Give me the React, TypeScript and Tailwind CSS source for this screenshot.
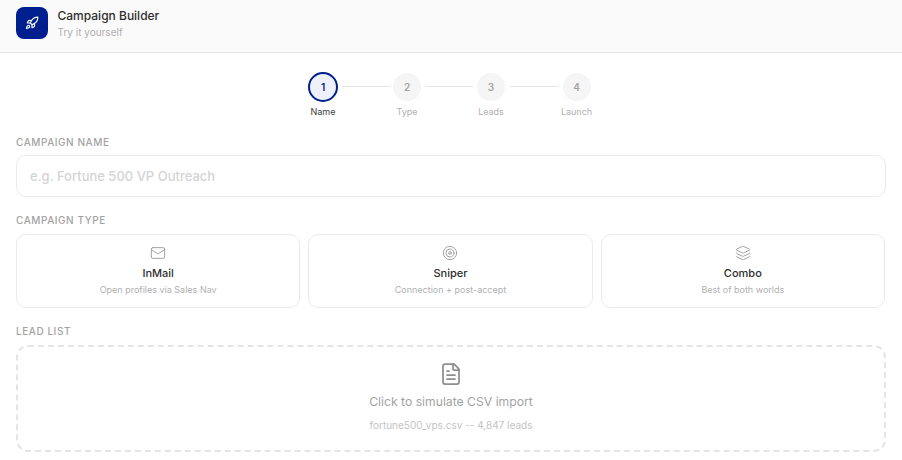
import { FileText, Layers, Mail, Rocket, Target } from "lucide-react";

const steps = [
  { n: 1, label: "Name", width: "w-[30px]" },
  { n: 2, label: "Type", width: "w-[28px]" },
  { n: 3, label: "Leads", width: "w-[30px]" },
  { n: 4, label: "Launch", width: "w-[31px]" },
];

const types = [
  { name: "InMail", desc: "Open profiles via Sales Nav", icon: Mail },
  { name: "Sniper", desc: "Connection + post-accept", icon: Target },
  { name: "Combo", desc: "Best of both worlds", icon: Layers },
];

function FieldLabel({ children }: { children: React.ReactNode }) {
  return (
    <div className="text-[10px] leading-[14px] font-[550] tracking-[0.55px] text-[#a3a3a3] uppercase">
      {children}
    </div>
  );
}

export default function App() {
  return (
    <div className="h-[460px] overflow-hidden bg-white font-['Inter',sans-serif] antialiased">
      {/* Header */}
      <header className="flex h-[53px] items-start gap-[9.5px] border-b border-[#e5e5e5] bg-[#fafafa] pt-[7px] pl-4">
        <div className="flex h-8 w-8 items-center justify-center rounded-lg bg-[#001f8f] text-white">
          <Rocket className="h-3.5 w-3.5" />
        </div>
        <div>
          <div className="mt-[1px] text-[12px] leading-4 font-[550] text-[#2e2e2e]">
            Campaign Builder
          </div>
          <div className="mt-[1px] text-[10px] leading-[14px] text-[#b0b0b0]">Try it yourself</div>
        </div>
      </header>

      {/* Stepper */}
      <div className="flex items-start justify-center pt-[19px] pr-[2px]">
        {steps.map((step, i) => (
          <div key={step.n} className="flex items-start">
            {i > 0 && <div className="mx-[3.5px] mt-[14px] h-px w-12 bg-[#e5e5e5]" />}
            <div className={`flex flex-col items-center ${step.width}`}>
              {step.n === 1 ? (
                <div className="flex h-[30px] w-[30px] items-center justify-center rounded-full border-2 border-[#001f8f] bg-[#eef0fa] text-[10px] font-semibold text-[#001f8f]">
                  1
                </div>
              ) : (
                <div className="mt-px flex h-7 w-7 items-center justify-center rounded-full bg-[#f5f5f5] text-[10px] font-semibold text-[#a3a3a3]">
                  {step.n}
                </div>
              )}
              <div
                className={`text-[9px] leading-3 whitespace-nowrap ${
                  step.n === 1 ? "mt-[4px] text-[#404040]" : "mt-[5px] text-[#b0b0b0]"
                }`}
              >
                {step.label}
              </div>
            </div>
          </div>
        ))}
      </div>

      <div className="mt-[17px] px-4">
        <FieldLabel>Campaign Name</FieldLabel>
        <input
          placeholder="e.g. Fortune 500 VP Outreach"
          className="mt-[6px] h-[42px] w-[870px] rounded-[10px] border border-[#ebebeb] bg-white px-[13px] text-[13px] font-medium outline-none placeholder:text-[#d4d4d4]"
        />

        <div className="mt-4">
          <FieldLabel>Campaign Type</FieldLabel>
        </div>
        <div className="mt-[7px] grid w-[869px] grid-cols-3 gap-2">
          {types.map((t) => (
            <div
              key={t.name}
              className="flex h-[74px] flex-col items-center rounded-[10px] border border-[#ebebeb] pt-[10px]"
            >
              <t.icon className="h-4 w-4 text-[#a3a3a3]" strokeWidth={1.5} />
              <div className="mt-[5px] text-[11px] leading-[14px] font-[550] text-[#2e2e2e]">
                {t.name}
              </div>
              <div className="mt-[4px] text-[9px] leading-3 text-[#b0b0b0]">{t.desc}</div>
            </div>
          ))}
        </div>

        <div className="mt-4">
          <FieldLabel>Lead List</FieldLabel>
        </div>
        <div className="mt-[7px] flex h-[107px] w-[870px] flex-col items-center rounded-xl border-2 border-dashed border-[#e5e5e5] pt-[15px]">
          <FileText className="h-6 w-6 text-[#8f8f8f]" strokeWidth={1.75} />
          <div className="mt-[8px] text-[12.2px] leading-4 text-[#a3a3a3]">
            Click to simulate CSV import
          </div>
          <div className="mt-[9px] text-[10px] leading-3 text-[#c4c4c4]">
            fortune500_vps.csv -- 4,847 leads
          </div>
        </div>
      </div>
    </div>
  );
}
